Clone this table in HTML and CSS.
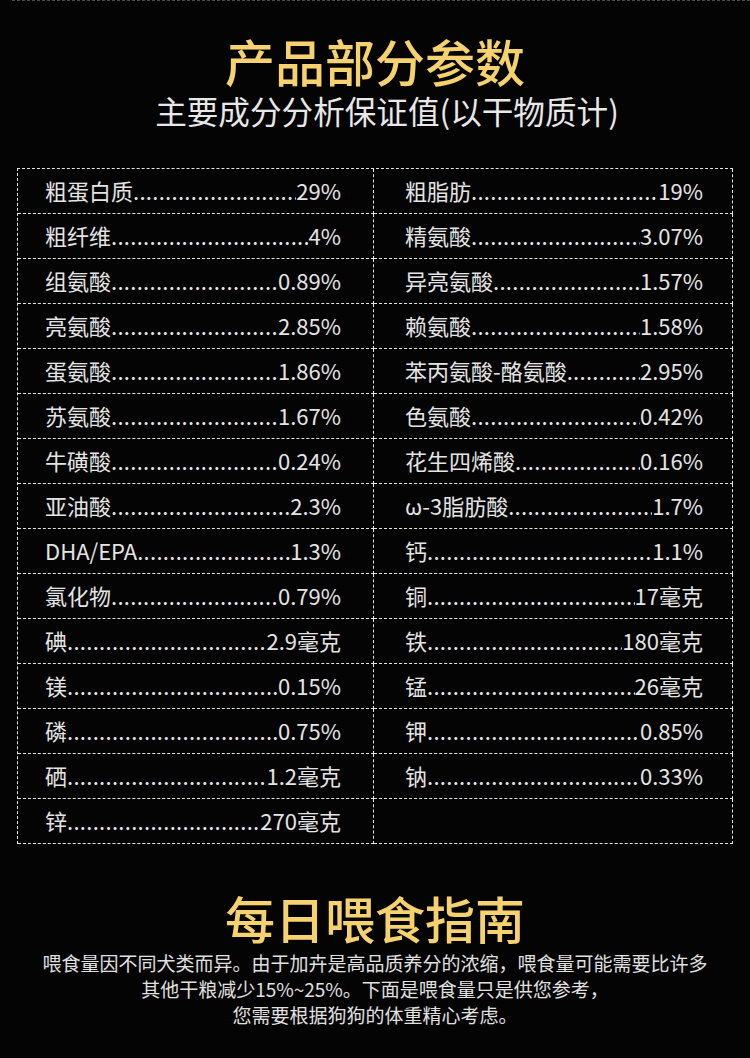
FILE: index.html
```html
<!DOCTYPE html>
<html lang="zh">
<head>
<meta charset="utf-8">
<link rel="stylesheet" href="styles.css">
</head>
<body>
<div class="page">
  <div class="topline"></div>
  <h1 class="title">产品部分参数</h1>
  <p class="subtitle">主要成分分析保证值(以干物质计)</p>

  <div class="table">
    <div class="cell"><span class="label">粗蛋白质</span><span class="leader"></span><span class="value">29%</span></div>
    <div class="cell"><span class="label">粗脂肪</span><span class="leader"></span><span class="value">19%</span></div>
    <div class="cell"><span class="label">粗纤维</span><span class="leader"></span><span class="value">4%</span></div>
    <div class="cell"><span class="label">精氨酸</span><span class="leader"></span><span class="value">3.07%</span></div>
    <div class="cell"><span class="label">组氨酸</span><span class="leader"></span><span class="value">0.89%</span></div>
    <div class="cell"><span class="label">异亮氨酸</span><span class="leader"></span><span class="value">1.57%</span></div>
    <div class="cell"><span class="label">亮氨酸</span><span class="leader"></span><span class="value">2.85%</span></div>
    <div class="cell"><span class="label">赖氨酸</span><span class="leader"></span><span class="value">1.58%</span></div>
    <div class="cell"><span class="label">蛋氨酸</span><span class="leader"></span><span class="value">1.86%</span></div>
    <div class="cell"><span class="label">苯丙氨酸-酪氨酸</span><span class="leader"></span><span class="value">2.95%</span></div>
    <div class="cell"><span class="label">苏氨酸</span><span class="leader"></span><span class="value">1.67%</span></div>
    <div class="cell"><span class="label">色氨酸</span><span class="leader"></span><span class="value">0.42%</span></div>
    <div class="cell"><span class="label">牛磺酸</span><span class="leader"></span><span class="value">0.24%</span></div>
    <div class="cell"><span class="label">花生四烯酸</span><span class="leader"></span><span class="value">0.16%</span></div>
    <div class="cell"><span class="label">亚油酸</span><span class="leader"></span><span class="value">2.3%</span></div>
    <div class="cell"><span class="label">ω-3脂肪酸</span><span class="leader"></span><span class="value">1.7%</span></div>
    <div class="cell"><span class="label">DHA/EPA</span><span class="leader"></span><span class="value">1.3%</span></div>
    <div class="cell"><span class="label">钙</span><span class="leader"></span><span class="value">1.1%</span></div>
    <div class="cell"><span class="label">氯化物</span><span class="leader"></span><span class="value">0.79%</span></div>
    <div class="cell"><span class="label">铜</span><span class="leader"></span><span class="value">17毫克</span></div>
    <div class="cell"><span class="label">碘</span><span class="leader"></span><span class="value">2.9毫克</span></div>
    <div class="cell"><span class="label">铁</span><span class="leader"></span><span class="value">180毫克</span></div>
    <div class="cell"><span class="label">镁</span><span class="leader"></span><span class="value">0.15%</span></div>
    <div class="cell"><span class="label">锰</span><span class="leader"></span><span class="value">26毫克</span></div>
    <div class="cell"><span class="label">磷</span><span class="leader"></span><span class="value">0.75%</span></div>
    <div class="cell"><span class="label">钾</span><span class="leader"></span><span class="value">0.85%</span></div>
    <div class="cell"><span class="label">硒</span><span class="leader"></span><span class="value">1.2毫克</span></div>
    <div class="cell"><span class="label">钠</span><span class="leader"></span><span class="value">0.33%</span></div>
    <div class="cell"><span class="label">锌</span><span class="leader"></span><span class="value">270毫克</span></div>
    <div class="cell empty"></div>
  </div>

  <h2 class="title title-2">每日喂食指南</h2>
  <p class="guide">喂食量因不同犬类而异。由于加卉是高品质养分的浓缩，喂食量可能需要比许多<br>其他干粮减少15%~25%。下面是喂食量只是供您参考，<br>您需要根据狗狗的体重精心考虑。</p>
</div>
</body>
</html>
```

FILE: styles.css
```css
html, body {
  margin: 0;
  padding: 0;
  background: #040404;
}

.page {
  width: 750px;
  height: 1058px;
  overflow: hidden;
  font-family: "Noto Sans CJK SC", "Noto Sans", sans-serif;
  color: #e4e4e4;
}

.topline {
  margin-left: 12px;
  border-top: 1px dashed #4a4a4a;
}

.title {
  margin: 33px 0 0;
  font-size: 50px;
  line-height: 52px;
  font-weight: 500;
  color: #f6d26e;
  text-align: center;
}

.subtitle {
  margin: 4px 0 38px;
  padding-left: 24px;
  font-size: 31.6px;
  line-height: 40px;
  font-weight: 400;
  color: #e8e8e8;
  text-align: center;
}

.table {
  margin: 0 17px;
  width: 716px;
  box-sizing: border-box;
  display: grid;
  grid-template-columns: 356px minmax(0, 1fr);
  border-top: 1px dashed #e6e6e6;
  border-left: 1px dashed #e6e6e6;
}

.cell {
  min-width: 0;
  height: 45px;
  box-sizing: border-box;
  border-right: 1px dashed #e6e6e6;
  border-bottom: 1px dashed #e6e6e6;
  display: flex;
  align-items: center;
  padding: 0 32px 3px 27px;
  font-size: 22px;
  line-height: 30px;
  white-space: nowrap;
  overflow: hidden;
}

.cell:nth-child(2n) {
  padding: 0 29px 3px 31px;
}

.label,
.value {
  flex: none;
}

.leader {
  flex: 1;
  min-width: 0;
  overflow: hidden;
  letter-spacing: 0.3px;
}

.leader::before {
  content: "................................................................................";
}

.title-2 {
  margin-top: 47px;
}

.guide {
  margin: 7px 0 0;
  font-size: 19px;
  line-height: 26px;
  color: #e0e0e0;
  text-align: center;
}
```
